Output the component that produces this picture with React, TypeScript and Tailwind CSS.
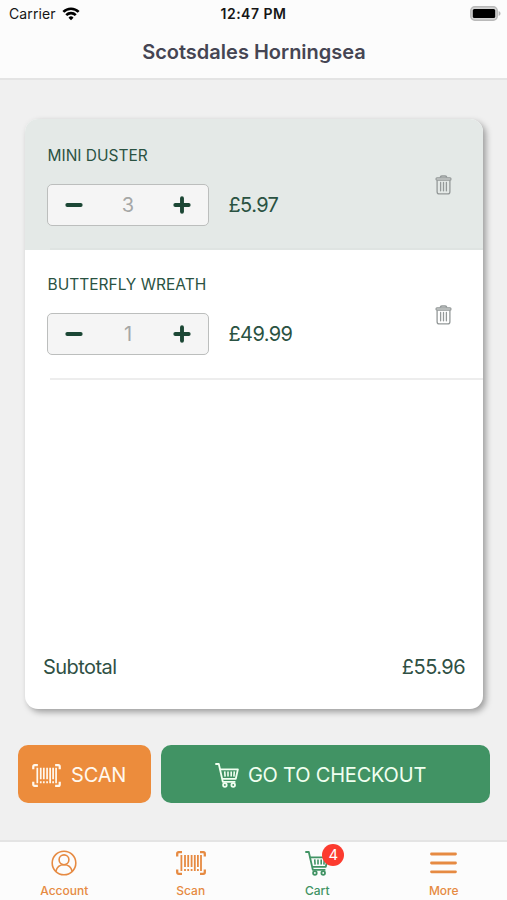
import { useState } from "react";

type CartItem = {
  id: string;
  name: string;
  quantity: number;
  unitPrice: number;
};

const initialItems: CartItem[] = [
  { id: "duster", name: "MINI DUSTER", quantity: 3, unitPrice: 1.99 },
  { id: "wreath", name: "BUTTERFLY WREATH", quantity: 1, unitPrice: 49.99 },
];

const formatPrice = (value: number) => `£${value.toFixed(2)}`;

function WifiIcon() {
  return (
    <svg width="18" height="14" viewBox="0 0 19 15" fill="none" stroke="#000" strokeWidth="2.8" aria-hidden="true">
      <path d="M1.3 5.3a11.6 11.6 0 0 1 16.4 0" />
      <path d="M4.4 8.7a7.2 7.2 0 0 1 10.2 0" />
      <path d="M9.5 14.2l-2.7-2.8a3.8 3.8 0 0 1 5.4 0z" fill="#000" stroke="none" />
    </svg>
  );
}

function BatteryIcon() {
  return (
    <svg width="31" height="15" viewBox="0 0 31 15" aria-hidden="true">
      <rect x="0.8" y="0.8" width="26.4" height="13.4" rx="4" fill="#d4d4d4" stroke="#b9b9b9" strokeWidth="1.5" />
      <rect x="2.8" y="2.9" width="22.4" height="9.2" rx="1.5" fill="#000" />
      <path d="M28.6 5v5c1.2-.4 1.9-1.4 1.9-2.5s-.7-2.1-1.9-2.5z" fill="#b5b5b5" />
    </svg>
  );
}

function TrashIcon() {
  return (
    <svg width="17" height="20" viewBox="0 0 17 20" fill="none" stroke="#949999" aria-hidden="true">
      <path d="M5.2 2.6c.2-1 .8-1.5 1.7-1.5h3.2c.9 0 1.5.5 1.7 1.5" strokeWidth="1.5" />
      <rect x="1" y="2.7" width="15" height="2.5" rx="1" fill="#c3c7c6" strokeWidth="1.1" />
      <path d="M2.1 5.3v11.4c0 1.4.8 2.2 2.2 2.2h8.4c1.4 0 2.2-.8 2.2-2.2V5.3" strokeWidth="1.3" />
      <path d="M5.6 7.5v8.3M8.5 7.5v8.3M11.4 7.5v8.3" strokeWidth="1.3" strokeLinecap="round" />
    </svg>
  );
}

function BarcodeIcon({ className }: { className?: string }) {
  return (
    <svg className={className} viewBox="0 0 30 24" fill="none" stroke="currentColor" aria-hidden="true">
      <path
        d="M6 1.2H2.7Q1.2 1.2 1.2 2.7V5.5M24 1.2h3.3q1.5 0 1.5 1.5V5.5M6 22.8H2.7q-1.5 0-1.5-1.5V18.5M24 22.8h3.3q1.5 0 1.5-1.5V18.5"
        strokeWidth="2.3"
      />
      <path d="M5.4 4v16M25 4v16M18.8 4v16" strokeWidth="1.8" />
      <path d="M9 4v12M12.2 4v12M15.6 4v12M21.9 4v12" strokeWidth="1.8" />
      <path d="M9 18v2M12.2 18v2M15.6 18v2M21.9 18v2" strokeWidth="1.8" />
    </svg>
  );
}

function CartIcon({ className }: { className?: string }) {
  return (
    <svg className={className} viewBox="0 0 24 25" fill="none" stroke="currentColor" strokeWidth="1.8" aria-hidden="true">
      <path d="M0.3 1h3.5l4 17.8h12.6" strokeLinejoin="round" />
      <path d="M4.9 6.3h18l-2.1 9.5H7.1" strokeLinejoin="round" />
      <path d="M9.7 8.4l.4 5.2M13 8.4v5.2M16.2 8.4v5.2M19.3 8.4l-.4 5.2" strokeWidth="1.6" />
      <circle cx="9.9" cy="22" r="1.8" />
      <circle cx="18.2" cy="22" r="1.8" />
    </svg>
  );
}

function AccountIcon() {
  return (
    <svg className="h-[26px] w-[26px]" viewBox="0 0 26 26" fill="none" stroke="currentColor" strokeWidth="1.6" aria-hidden="true">
      <circle cx="13" cy="13" r="11.8" />
      <circle cx="13" cy="9.8" r="4.9" />
      <path d="M4.9 21.3c.9-4 4.1-6.6 8.1-6.6s7.2 2.6 8.1 6.6" />
    </svg>
  );
}

function MenuIcon() {
  return (
    <svg className="h-[22px] w-[27px]" viewBox="0 0 27 22" stroke="currentColor" strokeWidth="2.8" strokeLinecap="round" aria-hidden="true">
      <path d="M1.5 2h24M1.5 11h24M1.5 19.8h24" />
    </svg>
  );
}

function StepIcon({ plus }: { plus?: boolean }) {
  return (
    <svg width="18" height="18" viewBox="0 0 18 18" stroke="#1c4735" strokeWidth="3.9" strokeLinecap="round" aria-hidden="true">
      <path d={plus ? "M2.3 9h13.4M9 2.3v13.4" : "M2.3 9h13.4"} />
    </svg>
  );
}

function CartRow({
  item,
  highlighted,
  onChange,
  onRemove,
}: {
  item: CartItem;
  highlighted: boolean;
  onChange: (quantity: number) => void;
  onRemove: () => void;
}) {
  return (
    <li className={highlighted ? "bg-[#e4e9e7] pt-px" : "bg-white"}>
      <div className="flex h-32 items-center justify-between pr-[31px] pl-[22px]">
        <div className={highlighted ? "pt-px" : "pb-px"}>
          <h2 className="pl-[0.5px] text-[15.5px] leading-6 text-[#2a5242]">{item.name}</h2>
          <div className="mt-4 flex items-center">
            <div className="flex h-[42px] w-[162px] items-center justify-between rounded-[5px] border-[1.5px] border-[#bcbebd] bg-[#f5f5f5] px-[17px]">
              <button type="button" aria-label="Decrease" onClick={() => onChange(Math.max(1, item.quantity - 1))}>
                <StepIcon />
              </button>
              <span className="text-xl text-[#a5a7a6]">{item.quantity}</span>
              <button type="button" aria-label="Increase" onClick={() => onChange(item.quantity + 1)}>
                <StepIcon plus />
              </button>
            </div>
            <span className="ml-[19.5px] text-xl tracking-[-0.6px] text-[#2a5242]">
              {formatPrice(item.quantity * item.unitPrice)}
            </span>
          </div>
        </div>
        <button type="button" aria-label="Remove" className="pt-0.5" onClick={onRemove}>
          <TrashIcon />
        </button>
      </div>
      <div className={`ml-[25px] h-0.5 ${highlighted ? "bg-[#dfe4e2]" : "bg-[#ededed]"}`} />
    </li>
  );
}

export default function App() {
  const [items, setItems] = useState(initialItems);

  const subtotal = items.reduce((sum, item) => sum + item.quantity * item.unitPrice, 0);
  const count = items.reduce((sum, item) => sum + item.quantity, 0);

  const updateQuantity = (id: string, quantity: number) => {
    setItems(prev => prev.map(item => (item.id === id ? { ...item, quantity } : item)));
  };

  const removeItem = (id: string) => {
    setItems(prev => prev.filter(item => item.id !== id));
  };

  return (
    <div className="flex h-screen w-full flex-col overflow-hidden bg-[#f0f0f0] font-['Inter','Liberation_Sans',sans-serif]">
      <header className="h-20 shrink-0 border-b-2 border-[#e4e4e4] bg-[#fcfcfc]">
        <div className="grid h-[27px] grid-cols-3 items-center px-1.5 text-sm text-[#161616]">
          <div className="flex items-center gap-1.5 pl-[3px]">
            <span className="tracking-[0.1px]">Carrier</span>
            <WifiIcon />
          </div>
          <span className="text-center font-semibold tracking-[0.5px]">12:47 PM</span>
          <div className="flex justify-end">
            <BatteryIcon />
          </div>
        </div>
        <h1 className="mt-[11px] pl-px text-center text-xl leading-7 font-semibold text-[#454553]">Scotsdales Horningsea</h1>
      </header>

      <main className="flex flex-1 flex-col pt-[39px]">
        <section className="mr-6 ml-[25px] flex h-[590px] flex-col overflow-hidden rounded-[13px] bg-white shadow-[3px_3px_6px_rgba(0,0,0,0.35)]">
          <ul>
            {items.map((item, index) => (
              <CartRow
                key={item.id}
                item={item}
                highlighted={index === 0}
                onChange={quantity => updateQuantity(item.id, quantity)}
                onRemove={() => removeItem(item.id)}
              />
            ))}
          </ul>
          <div className="mt-auto flex justify-between px-[18px] pb-7 text-xl tracking-[-0.55px] text-[#2f5044]">
            <span>Subtotal</span>
            <span>{formatPrice(subtotal)}</span>
          </div>
        </section>

        <div className="mt-9 flex gap-2.5 pr-[17px] pl-[18px] text-xl tracking-[-0.2px] text-[#fff8ee]">
          <button type="button" className="flex h-[58px] w-[133px] items-center rounded-[10px] bg-[#ec8c3c] pt-0.5 pl-3.5">
            <BarcodeIcon className="h-[23px] w-[29px]" />
            <span className="ml-2.5">SCAN</span>
          </button>
          <button
            type="button"
            className="flex h-[58px] flex-1 items-center justify-center gap-[9px] rounded-[10px] bg-[#419364] pt-0.5 pr-2.5 text-[#f0fff0]"
          >
            <CartIcon className="h-[25px] w-6" />
            <span>GO TO CHECKOUT</span>
          </button>
        </div>
      </main>

      <nav className="grid h-[60px] shrink-0 grid-cols-4 border-t-2 border-[#e4e4e4] bg-[#fcfcfc] pl-px text-xs font-medium text-[#e68a42]">
        <a className="flex flex-col items-center">
          <span className="flex h-[42px] items-center"><AccountIcon /></span>
          <span className="-mt-px leading-4">Account</span>
        </a>
        <a className="flex flex-col items-center">
          <span className="flex h-[42px] items-center"><BarcodeIcon className="h-6 w-[30px]" /></span>
          <span className="-mt-px leading-4">Scan</span>
        </a>
        <a className="flex flex-col items-center text-[#419364]">
          <span className="relative flex h-[42px] items-center">
            <CartIcon className="h-[25px] w-6" />
            <span className="absolute top-0.5 left-[17px] flex h-[22px] w-[22px] items-center justify-center rounded-full bg-[#fc3b2f] text-[15px] font-normal text-white">
              {count}
            </span>
          </span>
          <span className="-mt-px leading-4">Cart</span>
        </a>
        <a className="flex flex-col items-center">
          <span className="flex h-[42px] items-center"><MenuIcon /></span>
          <span className="-mt-px leading-4">More</span>
        </a>
      </nav>
    </div>
  );
}
